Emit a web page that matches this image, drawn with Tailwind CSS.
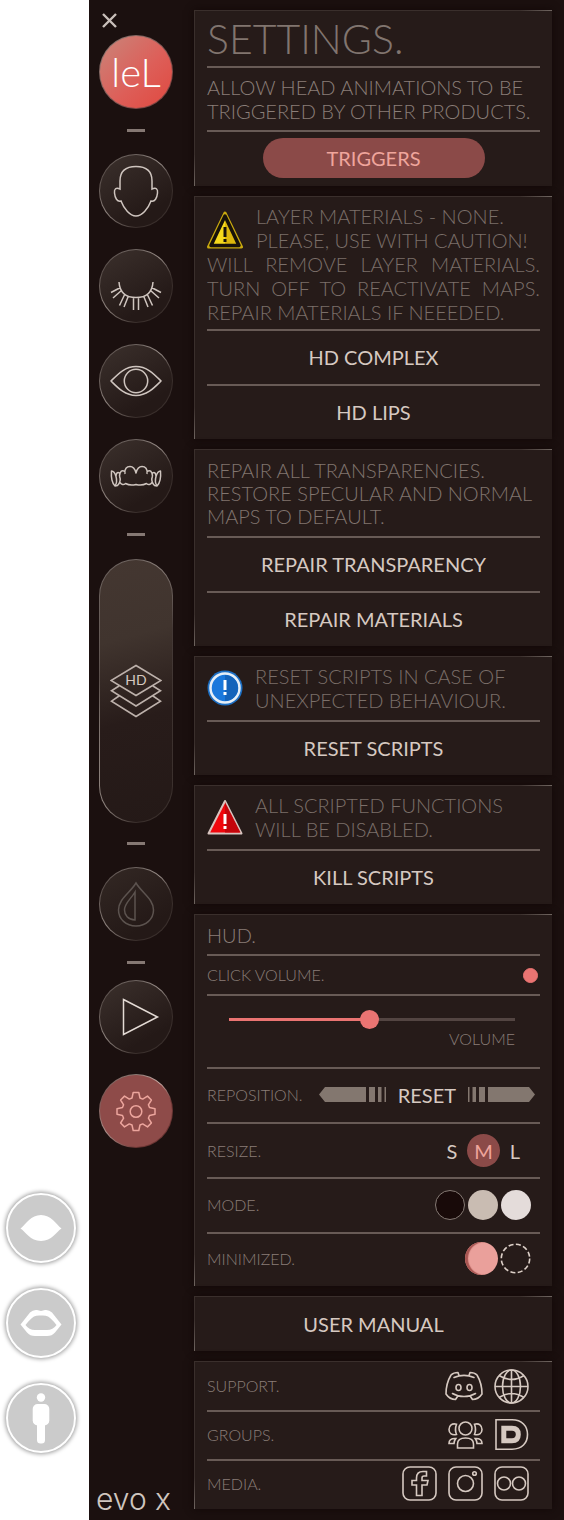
<!DOCTYPE html>
<html lang="en">
<head>
    <meta charset="UTF-8" />
    <meta name="viewport" content="width=device-width, initial-scale=1.0"/>
    <title>EVO X Settings</title>
    <script src="https://cdn.jsdelivr.net/npm/@tailwindcss/browser@4"></script>
</head>
<body class="min-h-screen flex bg-white font-['Lato',sans-serif] text-[#d6c9c1]">

    <!-- Body part shortcuts -->
    <aside class="w-[89px] shrink-0 flex flex-col justify-end gap-[25px] pl-[6px] pb-[67px]">
        <button aria-label="Eyes" class="size-[70px] rounded-full bg-[#cbcbcb] border-2 border-white shadow-[0_0_4px_1px_rgba(0,0,0,0.4)]">
            <svg viewBox="2 2 66 66" fill="#fff"><path d="M14.500 35.500C20 31 25 22 35 22S50 31 55.500 35.500C50 39 46 48 35 48S20 39 14.500 35.500Z"/></svg>
        </button>
        <button aria-label="Lips" class="size-[70px] rounded-full bg-[#cbcbcb] border-2 border-white shadow-[0_0_4px_1px_rgba(0,0,0,0.4)]">
            <svg viewBox="2 2 66 66" fill="#fff" fill-rule="evenodd"><path d="M14.500 36.500L24 24.500Q27 21.500 31 22L35 23L39 22Q43 21.500 46 24.500L55.500 36.500L49 44.500Q46 48 41 48H29Q24 48 21 44.500ZM19.500 37Q24 31 28 28.500Q31 27 35 27.500Q39 27 42 28.500Q46 31 50.500 37Q47 42 41 42H29Q23 42 19.500 37Z"/></svg>
        </button>
        <button aria-label="Body" class="size-[70px] rounded-full bg-[#cbcbcb] border-2 border-white shadow-[0_0_4px_1px_rgba(0,0,0,0.4)]">
            <svg viewBox="2 2 66 66" fill="#fff"><circle cx="35" cy="14.500" r="4.200"/><rect x="26.700" y="21" width="16.600" height="21.500" rx="5"/><rect x="31" y="36" width="8" height="24.500" rx="3.500"/></svg>
        </button>
    </aside>

    <!-- Navigation -->
    <nav class="w-[105px] shrink-0 flex flex-col items-center pr-[11px] bg-[#1b100f]">
        <button aria-label="Close" class="self-start ml-[13px] mt-[13px]">
            <svg class="size-[15px]" viewBox="0 0 15 15" stroke="#c9bfba" stroke-width="2.400"><path d="M1 1L14 14M14 1L1 14"/></svg>
        </button>
        <button class="mt-[7px] size-[74px] rounded-full border border-transparent [background:linear-gradient(135deg,#c9857a,#dd5f59_55%,#e0483f)_padding-box,linear-gradient(135deg,#8a7a74,#7c3a38)_border-box] text-[40px] leading-none font-light text-white">leL</button>
        <hr class="mt-[20px] w-[18px] h-[3px] border-0 bg-[#857873]"/>
        <button aria-label="Head" class="mt-[22px] size-[74px] rounded-full border border-transparent [background:linear-gradient(150deg,#3b302c,#241917_75%)_padding-box,conic-gradient(#6f6561,#9a8f8a_40deg,#3a2f2c_75deg,#3a2f2c_180deg,#8d827d_235deg,#5a4f4b_290deg,#6f6561)_border-box]">
            <svg viewBox="0 0 72 72" fill="none" stroke="#cfc5bf" stroke-width="1.500"><path d="M20 34V26C20 16 26 11.500 36 11.500S52 16 52 26V34C56 32 58 34 57.500 38C57 43 55 47 51 46C48 54 42 61 36 61S24 54 21 46C17 47 15 43 14.500 38C14 34 16 32 20 34Z"/></svg>
        </button>
        <button aria-label="Lashes" class="mt-[21px] size-[74px] rounded-full border border-transparent [background:linear-gradient(150deg,#3b302c,#241917_75%)_padding-box,conic-gradient(#6f6561,#9a8f8a_40deg,#3a2f2c_75deg,#3a2f2c_180deg,#8d827d_235deg,#5a4f4b_290deg,#6f6561)_border-box]">
            <svg viewBox="0 0 72 72" fill="none" stroke="#cfc5bf" stroke-width="1.500"><path d="M19 32Q20 47.500 36 47.500Q52 47.500 53 32M20.500 37.500L11 42.500M22 40L13 48M25 43.700L19.500 55.500M28.500 45.700L24 57M33.500 47.500V60M51.500 37.500L61 42.500M50 40L59 48M47 43.700L52.500 55.500M43.500 45.700L48 57M38.500 47.500V60"/></svg>
        </button>
        <button aria-label="Eyes" class="mt-[21px] size-[74px] rounded-full border border-transparent [background:linear-gradient(150deg,#3b302c,#241917_75%)_padding-box,conic-gradient(#6f6561,#9a8f8a_40deg,#3a2f2c_75deg,#3a2f2c_180deg,#8d827d_235deg,#5a4f4b_290deg,#6f6561)_border-box]">
            <svg viewBox="0 0 72 72" fill="none" stroke="#cfc5bf" stroke-width="1.500"><path d="M11 36C18 29 25 21.500 36 21.500S54 29 61 36C54 43 47 50.500 36 50.500S18 43 11 36Z"/><circle cx="36" cy="36" r="11.700"/></svg>
        </button>
        <button aria-label="Teeth" class="mt-[21px] size-[74px] rounded-full border border-transparent [background:linear-gradient(150deg,#3b302c,#241917_75%)_padding-box,conic-gradient(#6f6561,#9a8f8a_40deg,#3a2f2c_75deg,#3a2f2c_180deg,#8d827d_235deg,#5a4f4b_290deg,#6f6561)_border-box]">
            <svg viewBox="0 0 72 72" fill="none" stroke="#cfc5bf" stroke-width="1.500" stroke-linejoin="round"><path d="M25 34C24 28.500 27 26.500 30 26.500S35 29 36 33C37 29 39 26.500 42 26.500S48 28.500 47 34M25 31.500C22 29.500 20 31 19.500 36M47 31.500C50 29.500 52 31 52.500 36M19.500 33C17 31.500 16 34 16 36.500M52.500 33C55 31.500 56 34 56 36.500M16 36.500C15 33 13.500 31 11.500 31C11 37 12 43 15 46C17 43 17 40 16 36.500M56 36.500C57 33 58.500 31 60.500 31C61 37 60 43 57 46C55 43 55 40 56 36.500M19.500 36C21 40 20 43 17.500 45.500L15 46M52.500 36C51 40 52 43 54.500 45.500L57 46M20 42.500Q22.500 46 25.500 43.500Q30 46 36 44.500Q42 46 46.500 43.500Q49.500 46 52 42.500"/></svg>
        </button>
        <hr class="mt-[20px] w-[18px] h-[3px] border-0 bg-[#857873]"/>
        <button aria-label="HD layers" class="mt-[23px] w-[74px] h-[264px] flex items-center justify-center rounded-full border border-transparent [background:linear-gradient(165deg,#443731,#40342e_30%,#281c1a_60%,#241917)_padding-box,conic-gradient(#6f6561,#8a7f7a_10deg,#443936_30deg,#3a2f2c_180deg,#8d827d_195deg,#5a4f4b_290deg,#6f6561)_border-box]">
            <svg class="w-[52px] h-[54px]" viewBox="0 0 52 54" fill="none" stroke="#bdb1ab" stroke-width="1.600">
                <path d="M26 1.500L51 16.500L26 31.500L1 16.500ZM9 22L1.500 26.700L26 42L50.500 26.700L43 22M9 32L1.500 37.200L26 52.500L50.500 37.200L43 32"/>
                <text x="26" y="21" text-anchor="middle" class="font-['Lato',sans-serif] text-[14px] font-normal" fill="#d6c9c1" stroke="none">HD</text>
            </svg>
        </button>
        <hr class="mt-[19px] w-[18px] h-[3px] border-0 bg-[#857873]"/>
        <button aria-label="Tint" class="mt-[22px] size-[74px] rounded-full border border-transparent [background:linear-gradient(150deg,#332824,#241917_75%)_padding-box,conic-gradient(#6f6561,#9a8f8a_40deg,#3a2f2c_75deg,#3a2f2c_180deg,#8d827d_235deg,#5a4f4b_290deg,#6f6561)_border-box]">
            <svg viewBox="0 0 72 72" fill="none" stroke="#5c534f" stroke-width="1.500"><path d="M36 15C30 25 18.500 31 18.500 42C18.500 51 26 58 36 58S53.500 51 53.500 42C53.500 31 42 25 36 15ZM35 24V52C28 51.500 24.500 47 24.500 42C24.500 35 31 31 35 24Z"/></svg>
        </button>
        <hr class="mt-[20px] w-[18px] h-[3px] border-0 bg-[#857873]"/>
        <button aria-label="Play" class="mt-[16px] size-[74px] rounded-full border border-transparent [background:linear-gradient(150deg,#3b302c,#241917_75%)_padding-box,conic-gradient(#6f6561,#9a8f8a_40deg,#3a2f2c_75deg,#3a2f2c_180deg,#8d827d_235deg,#5a4f4b_290deg,#6f6561)_border-box]">
            <svg viewBox="0 0 72 72" fill="none" stroke="#e3dad4" stroke-width="1.500"><path d="M23.500 18.500L57.500 36L23.500 53.500Z"/></svg>
        </button>
        <button aria-label="Settings" class="mt-[20px] size-[74px] rounded-full border border-transparent [background:linear-gradient(#8e4b49,#8e4b49)_padding-box,conic-gradient(#8a7a74,#c9aaa4_40deg,#6b3533_75deg,#6b3533_180deg,#a98e89_235deg,#7a5552_290deg,#8a7a74)_border-box]">
            <svg viewBox="-36 -36.500 72 72" fill="none" stroke="#eca59d" stroke-width="1.500" stroke-linejoin="round"><path d="M-4 -13.500L-2.800 -19H2.800L4 -13.500L6.700 -12.400L11.500 -15.400L15.400 -11.500L12.400 -6.700L13.500 -4L19 -2.800V2.800L13.500 4L12.400 6.700L15.400 11.500L11.500 15.400L6.700 12.400L4 13.500L2.800 19H-2.800L-4 13.500L-6.700 12.400L-11.500 15.400L-15.400 11.500L-12.400 6.700L-13.500 4L-19 2.800V-2.800L-13.500 -4L-12.400 -6.700L-15.400 -11.500L-11.500 -15.400L-6.700 -12.400Z"/><circle r="5.800"/></svg>
        </button>
        <p class="mt-auto pb-[5px] self-start pl-[7px] font-['Inter',sans-serif] text-[30px] leading-8 font-light text-[#cfc5bf] whitespace-nowrap">evo x</p>
    </nav>

    <!-- Settings panels -->
    <main class="grow min-w-0 flex flex-col gap-[10px] pt-[10px] pr-[12px] pb-[11px] bg-[#1b100f]">

        <section class="relative px-3 border-t border-l border-[#3a2f2c] bg-[#261b19] shadow-[0_0_8px_#120807] before:absolute before:-top-px before:right-0 before:w-8 before:h-px before:bg-linear-to-r before:from-transparent before:to-[#6f6560] after:absolute after:bottom-0 after:-left-px after:w-px after:h-8 after:bg-linear-to-b after:from-transparent after:to-[#6f6560]">
            <h1 class="text-[41px] leading-[55px] font-light text-[#81756f]">SETTINGS.</h1>
            <p class="border-y-2 border-[#685b56] py-[7px] text-[20px] leading-6 font-light text-[#8a7e78] whitespace-nowrap">ALLOW HEAD ANIMATIONS TO BE<br/>TRIGGERED BY OTHER PRODUCTS.</p>
            <button class="block mx-auto mt-[6px] mb-2 w-2/3 h-10 rounded-full bg-[#8b4a48] text-[20px] text-[#efa59c]">TRIGGERS</button>
        </section>

        <section class="relative px-3 border-t border-l border-[#3a2f2c] bg-[#261b19] shadow-[0_0_8px_#120807] before:absolute before:-top-px before:right-0 before:w-8 before:h-px before:bg-linear-to-r before:from-transparent before:to-[#6f6560] after:absolute after:bottom-0 after:-left-px after:w-px after:h-8 after:bg-linear-to-b after:from-transparent after:to-[#6f6560]">
            <div class="pt-[7px] pb-[5px] text-[20px] leading-6 font-light text-[#7b6f69] whitespace-nowrap">
                <svg class="float-left w-[36px] h-[38px] mt-[7px] mr-[13px]" viewBox="0 0 36 38"><defs><linearGradient id="gold"><stop offset=".5" stop-color="#f5d91c"/><stop offset=".5" stop-color="#dcb70c"/></linearGradient></defs><path d="M18 2L34.500 36H1.500Z" fill="#c9a90f" stroke="#c9a90f" stroke-width="3" stroke-linejoin="round"/><path d="M18 5L32 34.500H4Z" fill="url(#gold)" stroke="#17120a" stroke-width="3.500" stroke-linejoin="round"/><path d="M18 16V26M18 28V31" stroke="#17120a" stroke-width="3"/></svg>
                <p>LAYER MATERIALS - NONE.</p>
                <p>PLEASE, USE WITH CAUTION!</p>
                <p class="[text-align-last:justify] whitespace-normal">WILL REMOVE LAYER MATERIALS.</p>
                <p class="[text-align-last:justify] whitespace-normal">TURN OFF TO REACTIVATE MAPS.</p>
                <p>REPAIR MATERIALS IF NEEEDED.</p>
            </div>
            <button class="block w-full h-[55px] pb-[2px] border-t-2 border-[#685b56] text-[20px]">HD COMPLEX</button>
            <button class="block w-full h-[55px] pb-[2px] border-t-2 border-[#685b56] text-[20px]">HD LIPS</button>
        </section>

        <section class="relative px-3 border-t border-l border-[#3a2f2c] bg-[#261b19] shadow-[0_0_8px_#120807] before:absolute before:-top-px before:right-0 before:w-8 before:h-px before:bg-linear-to-r before:from-transparent before:to-[#6f6560] after:absolute after:bottom-0 after:-left-px after:w-px after:h-8 after:bg-linear-to-b after:from-transparent after:to-[#6f6560]">
            <p class="pt-[9px] pb-2 text-[20px] leading-[23px] font-light text-[#81756f] whitespace-nowrap">REPAIR ALL TRANSPARENCIES.<br/>RESTORE SPECULAR AND NORMAL<br/>MAPS TO DEFAULT.</p>
            <button class="block w-full h-[55px] pb-[2px] border-t-2 border-[#685b56] text-[20px]">REPAIR TRANSPARENCY</button>
            <button class="block w-full h-[55px] pb-[2px] border-t-2 border-[#685b56] text-[20px]">REPAIR MATERIALS</button>
        </section>

        <section class="relative px-3 border-t border-l border-[#3a2f2c] bg-[#261b19] shadow-[0_0_8px_#120807] before:absolute before:-top-px before:right-0 before:w-8 before:h-px before:bg-linear-to-r before:from-transparent before:to-[#6f6560] after:absolute after:bottom-0 after:-left-px after:w-px after:h-8 after:bg-linear-to-b after:from-transparent after:to-[#6f6560]">
            <div class="flex items-center gap-3 pt-[7px] pb-2 text-[20px] leading-6 font-light text-[#7b6f69] whitespace-nowrap">
                <svg class="size-9 shrink-0" viewBox="0 0 36 36"><circle cx="18" cy="18" r="17.500" fill="#1c6fc4"/><circle cx="18" cy="18" r="14.500" fill="#1a78dc" stroke="#e6eef6" stroke-width="2.500"/><path d="M18 5A13 13 0 0 1 18 31Z" fill="#1463ba"/><path d="M18 10V20M18 22V25" stroke="#fff" stroke-width="3"/></svg>
                <p>RESET SCRIPTS IN CASE OF<br/>UNEXPECTED BEHAVIOUR.</p>
            </div>
            <button class="block w-full h-[55px] pb-[2px] border-t-2 border-[#685b56] text-[20px]">RESET SCRIPTS</button>
        </section>

        <section class="relative px-3 border-t border-l border-[#3a2f2c] bg-[#261b19] shadow-[0_0_8px_#120807] before:absolute before:-top-px before:right-0 before:w-8 before:h-px before:bg-linear-to-r before:from-transparent before:to-[#6f6560] after:absolute after:bottom-0 after:-left-px after:w-px after:h-8 after:bg-linear-to-b after:from-transparent after:to-[#6f6560]">
            <div class="flex items-center gap-3 pt-[7px] pb-2 text-[20px] leading-6 font-light text-[#7b6f69] whitespace-nowrap">
                <svg class="size-9 shrink-0" viewBox="0 0 36 36"><path d="M18 2L34.500 34.500H1.500Z" fill="#f0060c" stroke="#d8c4bf" stroke-width="2" stroke-linejoin="round"/><path d="M18 3V33.500H33.500Z" fill="#c4050b"/><path d="M18 15V25M18 27V30" stroke="#fff" stroke-width="3"/></svg>
                <p>ALL SCRIPTED FUNCTIONS<br/>WILL BE DISABLED.</p>
            </div>
            <button class="block w-full h-[55px] pb-[2px] border-t-2 border-[#685b56] text-[20px]">KILL SCRIPTS</button>
        </section>

        <!-- HUD -->
        <section class="relative px-3 border-t border-l border-[#3a2f2c] bg-[#261b19] text-[16px] font-light text-[#8a7e78] shadow-[0_0_8px_#120807] before:absolute before:-top-px before:right-0 before:w-8 before:h-px before:bg-linear-to-r before:from-transparent before:to-[#6f6560] after:absolute after:bottom-0 after:-left-px after:w-px after:h-8 after:bg-linear-to-b after:from-transparent after:to-[#6f6560]">
            <h2 class="h-[39px] text-[20px] leading-[41px]">HUD.</h2>
            <div class="h-10 flex items-center justify-between pr-[2px] border-t-2 border-[#685b56]">
                <label for="click-volume">CLICK VOLUME.</label>
                <input id="click-volume" type="checkbox" checked class="appearance-none size-[15px] rounded-full border border-[#ea7472] checked:bg-[#ea7472]"/>
            </div>
            <div class="h-[73px] flex flex-col pl-[22px] pr-[25px] pt-[14px] border-t-2 border-[#685b56]">
                <input id="volume" type="range" min="0" max="100" value="49" style="--fill:49%" class="appearance-none w-full h-[19px] bg-transparent [&::-webkit-slider-runnable-track]:h-[3px] [&::-webkit-slider-runnable-track]:bg-[linear-gradient(to_right,#ea7472_var(--fill),#534542_var(--fill))] [&::-webkit-slider-thumb]:appearance-none [&::-webkit-slider-thumb]:size-[19px] [&::-webkit-slider-thumb]:-mt-2 [&::-webkit-slider-thumb]:rounded-full [&::-webkit-slider-thumb]:bg-[#ea7472]"/>
                <label for="volume" class="self-end leading-5">VOLUME</label>
            </div>
            <div class="h-[55px] flex items-center justify-between pr-[5px] pb-[2px] border-t-2 border-[#685b56]">
                <span>REPOSITION.</span>
                <div class="flex items-center gap-3">
                    <button aria-label="Move left"><svg class="w-[67px] h-[15px]" viewBox="0 0 67 15" fill="#83776f"><path d="M0 7.500L6 0H47V15H6ZM50 0H56V15H50ZM59 0H62.500V15H59ZM65.500 0H67V15H65.500Z"/></svg></button>
                    <button class="text-[20px] font-normal text-[#d6c9c1]">RESET</button>
                    <button aria-label="Move right"><svg class="w-[67px] h-[15px]" viewBox="0 0 67 15" fill="#83776f"><path d="M67 7.500L61 0H20V15H61ZM17 0H11V15H17ZM8 0H4.500V15H8ZM1.500 0H0V15H1.500Z"/></svg></button>
                </div>
            </div>
            <fieldset class="h-[55px] flex items-center justify-between pr-[10px] border-t-2 border-[#685b56]">
                <legend class="float-left leading-[53px]">RESIZE.</legend>
                <div class="ml-auto flex text-[20px] font-normal text-[#d6c9c1]">
                    <label><input type="radio" name="size" class="peer sr-only"/><span class="w-[30px] h-[33px] flex items-center justify-center rounded-full peer-checked:bg-[#8b4a48] peer-checked:text-[#efa59c]">S</span></label>
                    <label><input type="radio" name="size" checked class="peer sr-only"/><span class="size-[33px] flex items-center justify-center rounded-full peer-checked:bg-[#8b4a48] peer-checked:text-[#efa59c]">M</span></label>
                    <label><input type="radio" name="size" class="peer sr-only"/><span class="w-[30px] h-[33px] flex items-center justify-center rounded-full peer-checked:bg-[#8b4a48] peer-checked:text-[#efa59c]">L</span></label>
                </div>
            </fieldset>
            <fieldset class="h-[55px] flex items-center justify-between pr-[9px] pb-[2px] border-t-2 border-[#685b56]">
                <legend class="float-left leading-[53px]">MODE.</legend>
                <div class="ml-auto flex gap-[3px]">
                    <input type="radio" name="mode" aria-label="Dark" class="appearance-none size-[30px] rounded-full border border-[#857a74] bg-[#180a09]"/>
                    <input type="radio" name="mode" aria-label="Beige" class="appearance-none size-[30px] rounded-full bg-[#c9bcb2]"/>
                    <input type="radio" name="mode" aria-label="Light" class="appearance-none size-[30px] rounded-full bg-[#e4dcda]"/>
                </div>
            </fieldset>
            <fieldset class="h-[54px] flex items-center justify-between pr-[9px] pb-[3px] border-t-2 border-[#685b56]">
                <legend class="float-left leading-[49px]">MINIMIZED.</legend>
                <div class="ml-auto flex items-center gap-[2px]">
                    <input type="radio" name="minimized" checked aria-label="Filled" class="appearance-none size-[33px] rounded-full bg-[#eaa09b] shadow-[inset_3px_0_1px_#a85551]"/>
                    <svg class="size-[31px]" viewBox="0 0 31 31" fill="none"><circle cx="15.500" cy="15.500" r="14.200" stroke="#ddd0c8" stroke-width="1.600" stroke-dasharray="5 2.430"/></svg>
                </div>
            </fieldset>
        </section>

        <section class="relative px-3 border-t border-l border-[#3a2f2c] bg-[#261b19] shadow-[0_0_8px_#120807] before:absolute before:-top-px before:right-0 before:w-8 before:h-px before:bg-linear-to-r before:from-transparent before:to-[#6f6560] after:absolute after:bottom-0 after:-left-px after:w-px after:h-8 after:bg-linear-to-b after:from-transparent after:to-[#6f6560]">
            <a href="#" class="block text-center text-[20px] leading-[54px]">USER MANUAL</a>
        </section>

        <!-- Links -->
        <section class="relative px-3 border-t border-l border-[#3a2f2c] bg-[#261b19] text-[16px] font-light text-[#8a7e78] shadow-[0_0_8px_#120807] before:absolute before:-top-px before:right-0 before:w-8 before:h-px before:bg-linear-to-r before:from-transparent before:to-[#6f6560] after:absolute after:bottom-0 after:-left-px after:w-px after:h-8 after:bg-linear-to-b after:from-transparent after:to-[#6f6560]">
            <div class="h-12 flex items-center justify-between pr-[11px]">
                <span>SUPPORT.</span>
                <div class="flex items-center gap-[11px]">
                    <a href="#" aria-label="Discord"><svg class="w-[38px] h-[30px]" viewBox="0 0 38 30" fill="none" stroke="#d6c9c1" stroke-width="1.600" stroke-linejoin="round" stroke-linecap="round"><path d="M14 4.500L13 1.500C10 1.500 7.500 2.500 6 4C3 9 1 16 1 23C3 26 6.500 28.500 10.500 28.500L12.500 25.500M24 4.500L25 1.500C28 1.500 30.500 2.500 32 4C35 9 37 16 37 23C35 26 31.500 28.500 27.500 28.500L25.500 25.500M9 6.500C15 4 23 4 29 6.500M7.500 22.500C14 26.500 24 26.500 30.500 22.500"/><ellipse cx="13.500" cy="16.500" rx="2.500" ry="3"/><ellipse cx="24.500" cy="16.500" rx="2.500" ry="3"/></svg></a>
                    <a href="#" aria-label="Website"><svg class="size-[35px]" viewBox="0 0 35 35" fill="none" stroke="#d6c9c1" stroke-width="1.600"><circle cx="17.500" cy="17.500" r="16.500"/><ellipse cx="17.500" cy="17.500" rx="9" ry="16.500"/><path d="M17.500 1V34M1 17.500H34M5 6.500Q17.500 14.500 30 6.500M5 28.500Q17.500 20.500 30 28.500"/></svg></a>
                </div>
            </div>
            <div class="h-[49px] flex items-center justify-between pr-[11px] pb-[2px] border-t-2 border-[#685b56]">
                <span>GROUPS.</span>
                <div class="flex items-center gap-[11px]">
                    <a href="#" aria-label="Community"><svg class="w-[35px] h-[28px]" viewBox="0 0 35 28" fill="none" stroke="#d6c9c1" stroke-width="1.600"><circle cx="17.500" cy="7.500" r="6.500"/><path d="M9.500 27V23C9.500 18.500 13 17 17.500 17S25.500 18.500 25.500 23V27ZM8.500 3.200C4 2 1 4.500 1 8.500S4 14.500 8.500 13.500Q6.500 8.500 8.500 3.200ZM26.500 3.200C31 2 34 4.500 34 8.500S31 14.500 26.500 13.500Q28.500 8.500 26.500 3.200ZM7 17.500C3 17.500 1 19.500 1 22.500H6Q6 20 7.800 17.500ZM28 17.500C32 17.500 34 19.500 34 22.500H29Q29 20 27.200 17.500Z"/></svg></a>
                    <a href="#" aria-label="Discuss"><svg class="size-[35px]" viewBox="0 0 35 35" fill="none" stroke="#d6c9c1"><path d="M2 2.800H18C28 2.800 33.500 9 33.500 17.500S28 32.200 18 32.200H2Z" stroke-width="1.600"/><path d="M9.800 11.300H18C22 11.300 24.300 13.500 24.300 17.500S22 23.700 18 23.700H9.800Z" stroke-width="5"/></svg></a>
                </div>
            </div>
            <div class="h-[50px] flex items-center justify-between pr-[11px] pb-[3px] border-t-2 border-[#685b56]">
                <span>MEDIA.</span>
                <div class="flex items-center gap-[11px]">
                    <a href="#" aria-label="Facebook"><svg class="size-[35px]" viewBox="0 0 35 35" fill="none" stroke="#d6c9c1" stroke-width="1.600"><rect x="1" y="1" width="33" height="33" rx="7"/><path d="M14.500 29.500V19H10V14.500H14.500V12C14.500 7.500 17 5.500 21 5.500H24.500V10H22C20.500 10 20 10.700 20 12V14.500H26L25 19H20V29.500Z"/></svg></a>
                    <a href="#" aria-label="Instagram"><svg class="size-[35px]" viewBox="0 0 35 35" fill="none" stroke="#d6c9c1" stroke-width="1.600"><rect x="1" y="1" width="33" height="33" rx="7"/><circle cx="17.500" cy="17.500" r="8"/><circle cx="26.500" cy="7.500" r="1.800"/></svg></a>
                    <a href="#" aria-label="Flickr"><svg class="size-[35px]" viewBox="0 0 35 35" fill="none" stroke="#d6c9c1" stroke-width="1.600"><rect x="1" y="1" width="33" height="33" rx="7"/><circle cx="10" cy="17.500" r="6.500"/><circle cx="25" cy="17.500" r="6.500"/></svg></a>
                </div>
            </div>
        </section>
    </main>

    <script>
        // keep the filled part of the track in step with the thumb
        const volume = document.getElementById("volume");
        volume.addEventListener("input", () => {
            volume.style.setProperty("--fill", volume.value + "%");
        });
    </script>
</body>
</html>
